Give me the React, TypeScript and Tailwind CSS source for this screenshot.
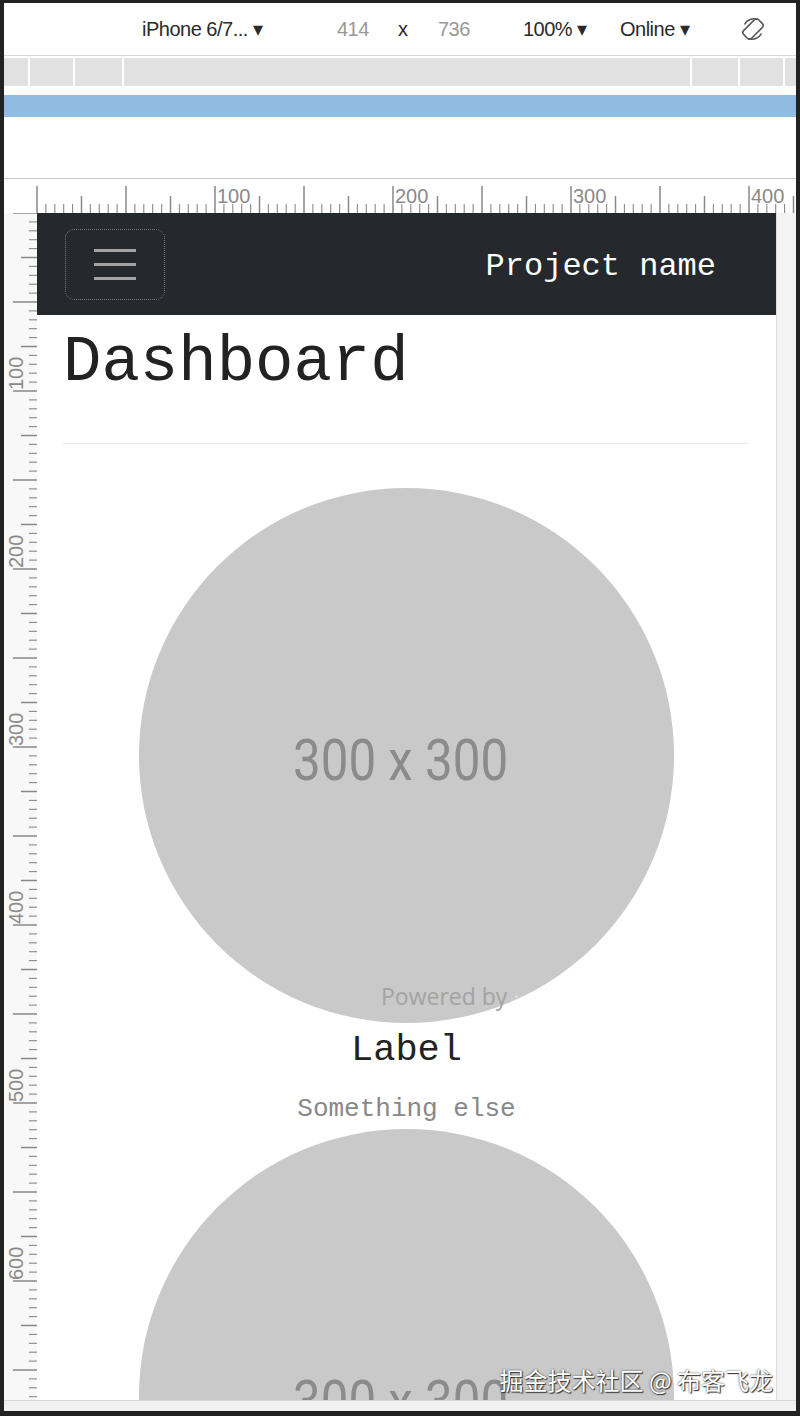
import React from "react";

const S = 1.78;
const MONO = "font-['Liberation_Mono',monospace]";

function TopRuler() {
  const ticks: React.ReactNode[] = [];
  for (let u = 0; u <= 425; u += 5) {
    const x = 33 + u * S;
    const h = u % 50 === 0 ? 27 : u % 25 === 0 ? 17 : 9;
    ticks.push(
      <line key={u} x1={x} x2={x} y1={34 - h} y2={34} stroke="#888" strokeWidth={u % 25 === 0 ? 1.5 : 1.1} />
    );
    if (u % 100 === 0 && u > 0) {
      ticks.push(
        <text key={`t${u}`} x={x + 2} y={24} fontSize={20} fill="#8a8a8a" fontFamily="Liberation Sans, sans-serif">
          {u}
        </text>
      );
    }
  }
  return (
    <svg width={792} height={34} className="block">
      {ticks}
    </svg>
  );
}

function LeftRuler() {
  const ticks: React.ReactNode[] = [];
  for (let u = 0; u <= 670; u += 5) {
    const y = u * S;
    const h = u % 50 === 0 ? 24 : u % 25 === 0 ? 16 : 8;
    ticks.push(
      <line key={u} x1={33 - h} x2={33} y1={y} y2={y} stroke="#888" strokeWidth={u % 25 === 0 ? 1.5 : 1.1} />
    );
    if (u % 100 === 0 && u > 0) {
      ticks.push(
        <text
          key={`t${u}`}
          transform={`translate(19, ${y - 1}) rotate(-90)`}
          fontSize={20}
          fill="#8a8a8a"
          fontFamily="Liberation Sans, sans-serif"
        >
          {u}
        </text>
      );
    }
  }
  return (
    <svg width={33} height={1187} className="block bg-[#f8f8f8]">
      {ticks}
    </svg>
  );
}

function RotateIcon() {
  return (
    <svg width="26" height="26" viewBox="0 0 26 26" fill="none" stroke="#555" strokeWidth="1.6">
      <path d="M4.5 8.5 A10.5 10.5 0 0 1 17.5 3.5" />
      <path d="M21.5 17.5 A10.5 10.5 0 0 1 8.5 22.5" />
      <g transform="rotate(45 13 13)">
        <rect x="7.5" y="2.5" width="11" height="21" rx="3" />
      </g>
    </svg>
  );
}

function Placeholder({ children }: { children?: React.ReactNode }) {
  return (
    <div className="relative mx-auto flex h-[535px] w-[535px] shrink-0 items-center justify-center rounded-full bg-[#c8c9c8]">
      <span className="mr-[12px] scale-x-[0.85] pt-[8px] font-['Roboto',sans-serif] text-[58px] leading-none text-[#8a8b8a]">
        300 x 300
      </span>
      {children}
    </div>
  );
}

export default function App() {
  return (
    <div className="relative h-[1416px] w-[800px] bg-[#222] px-[4px] pb-[5px] pt-[3px]">
      <div className="flex h-full flex-col overflow-hidden bg-white">
        {/* devtools toolbar */}
        <div className="flex h-[52px] shrink-0 items-center pl-[138px] font-['Liberation_Sans',sans-serif] text-[20px] tracking-[-0.5px] text-[#2a2a2a]">
          <span className="w-[148px] whitespace-nowrap">iPhone 6/7... ▾</span>
          <span className="ml-[47px] w-[35px] text-[#999]">414</span>
          <span className="ml-[26px] w-[15px]">x</span>
          <span className="ml-[25px] w-[36px] text-[#999]">736</span>
          <span className="ml-[49px] w-[79px] whitespace-nowrap">100% ▾</span>
          <span className="ml-[18px] w-[83px] whitespace-nowrap">Online ▾</span>
          <span className="ml-[37px] flex">
            <RotateIcon />
          </span>
        </div>
        <div className="h-[3px] shrink-0 border-t border-[#d6d6d6]" />
        <div className="flex h-[28px] shrink-0 gap-[2px] bg-white">
          <div className="w-[24px] bg-[#e1e1e1]" />
          <div className="w-[43px] bg-[#e1e1e1]" />
          <div className="w-[47px] bg-[#e1e1e1]" />
          <div className="flex-1 bg-[#e1e1e1]" />
          <div className="w-[46px] bg-[#e1e1e1]" />
          <div className="w-[43px] bg-[#e1e1e1]" />
          <div className="w-[11px] bg-[#e1e1e1]" />
        </div>
        <div className="h-[9px] shrink-0" />
        <div className="h-[22px] shrink-0 bg-[#8fbce0]" />
        <div className="h-[62px] shrink-0 border-b border-[#cfcfcf]" />

        {/* rulers + emulated viewport */}
        <div className="h-[34px] shrink-0">
          <TopRuler />
        </div>
        <div className="flex h-[1187px] shrink-0">
          <LeftRuler />
          <div className="relative flex w-[739px] shrink-0 flex-col overflow-hidden bg-white">
            <nav className="flex h-[102px] shrink-0 items-center justify-between bg-[#25292d] pl-[28px] pr-[60px]">
              <button className="flex h-[71px] w-[100px] flex-col items-center justify-center gap-[11px] rounded-[9px] border border-dotted border-[#7a7a7a]">
                <span className="h-[3px] w-[42px] bg-[#a3a3a3]" />
                <span className="h-[3px] w-[42px] bg-[#a3a3a3]" />
                <span className="h-[3px] w-[42px] bg-[#a3a3a3]" />
              </button>
              <span className={`${MONO} pt-[6px] text-[32px] leading-none text-white`}>Project name</span>
            </nav>

            <h1 className={`${MONO} mt-[16px] pl-[26px] text-[64px] leading-none text-[#222]`}>Dashboard</h1>
            <hr className="ml-[26px] mr-[28px] mt-[48px] border-[#e6e6e6]" />

            <div className="mt-[44px] flex flex-col items-center">
              <Placeholder>
                <span className="absolute left-[242px] top-[497px] whitespace-nowrap font-['Open_Sans',sans-serif] text-[23px] leading-none text-[#a3a3a3]">
                  Powered by <span className="text-[#dcdcdc]">·</span>
                </span>
              </Placeholder>
              <div className={`${MONO} mt-[5px] text-[37px] leading-[44px] text-[#222]`}>Label</div>
              <div className={`${MONO} mt-[21px] text-[26px] leading-[32px] text-[#888]`}>Something else</div>
              <div className="mt-[4px]">
                <Placeholder />
              </div>
            </div>
          </div>
          <div className="flex-1 border-l border-[#dedede] bg-[#f3f3f3]" />
        </div>
        <div className="flex-1 border-t border-[#d8d8d8] bg-[#f1f1f1]" />
      </div>

      <div className="absolute bottom-[24px] right-[27px] whitespace-nowrap font-['Noto_Sans_CJK_SC',sans-serif] text-[24px] leading-none text-white [text-shadow:0_0_2px_#333,1px_1px_1px_#333]">
        掘金技术社区 @ 布客飞龙
      </div>
    </div>
  );
}
